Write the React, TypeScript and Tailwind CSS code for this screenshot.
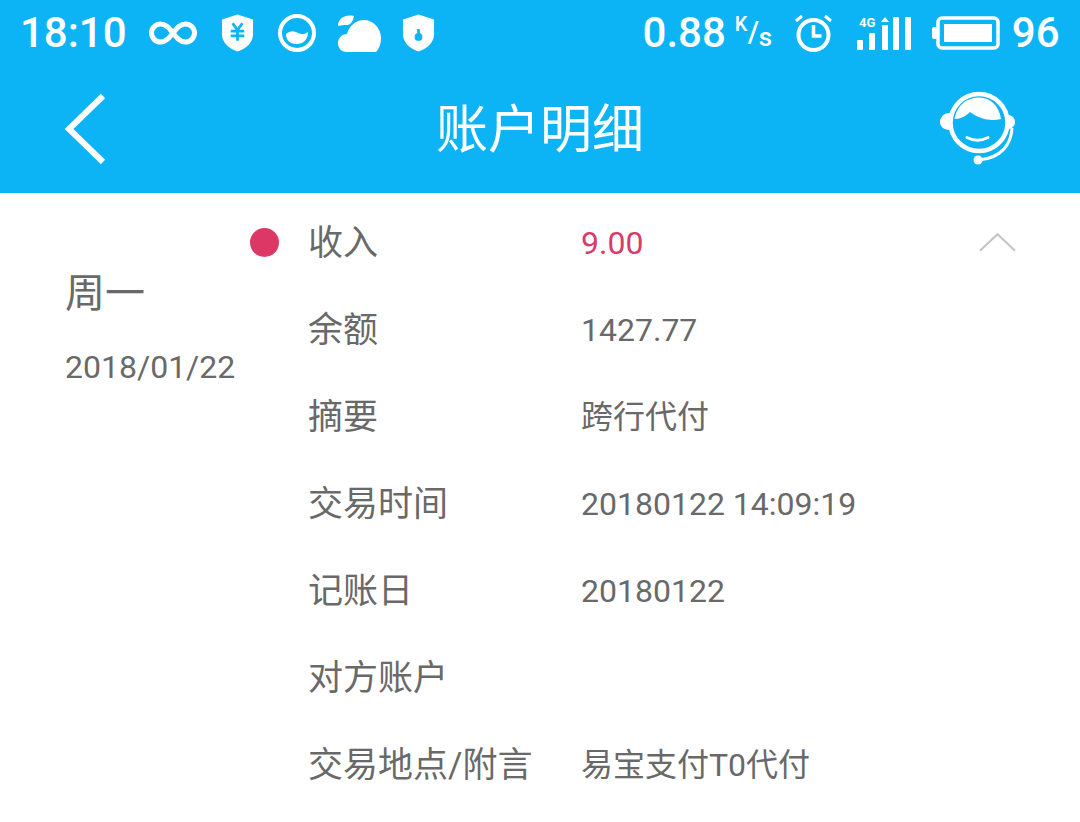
import React from 'react';

const cjk = "font-['Roboto','Noto_Sans_CJK_SC',sans-serif]";

const rows = [
  { label: '收入', value: '9.00', highlight: true },
  { label: '余额', value: '1427.77' },
  { label: '摘要', value: '跨行代付' },
  { label: '交易时间', value: '20180122 14:09:19' },
  { label: '记账日', value: '20180122' },
  { label: '对方账户', value: '' },
  { label: '交易地点/附言', value: '易宝支付T0代付' },
];

const StatusBar = () => (
  <div className="flex h-[66px] items-center text-white">
    <span className="ml-[20px] text-[42px] font-medium leading-none">18:10</span>
    <svg className="ml-[22px]" width="48" height="24" viewBox="0 0 48 24" fill="none" stroke="white" strokeWidth="5">
      <path d="M24 12C20 7 17 3 11.5 3a9 9 0 0 0 0 18c5.5 0 8.5-4 12.5-9s7-9 12.5-9a9 9 0 0 1 0 18c-5.5 0-8.5-4-12.5-9z" />
    </svg>
    <svg className="ml-[24px]" width="33" height="38" viewBox="0 0 34 38">
      <path d="M17 0l16 5v15c0 9-7 15-16 18C8 35 1 29 1 20V5z" fill="white" />
      <path d="M12 9l5 7 5-7M10 17h14M10 22h14M17 16v11" fill="none" stroke="#0db4f5" strokeWidth="2.8" />
    </svg>
    <svg className="ml-[24px]" width="38" height="38" viewBox="0 0 38 38">
      <circle cx="19" cy="19" r="17" fill="none" stroke="white" strokeWidth="4" />
      <path d="M8 20c5-4 8-3 12-1s7 1 10-1c0 8-5 12-11 12S8 27 8 20z" fill="white" />
    </svg>
    <svg className="ml-[21px]" width="44" height="38" viewBox="0 0 44 38" fill="white">
      <path d="M1 12C1 6 6 0 17 2c-1 6-4 9-7 9-3 0-6 0-9 1z" />
      <path d="M10 38C4 38 1 34 1 29c0-5 4-9 9-9 2-8 9-14 17-14 9 0 17 8 17 18 0 6-2 11-5 14z" />
    </svg>
    <svg className="ml-[21px]" width="33" height="38" viewBox="0 0 34 38">
      <path d="M17 0l16 5v15c0 9-7 15-16 18C8 35 1 29 1 20V5z" fill="white" />
      <circle cx="17" cy="23" r="4" fill="#0db4f5" />
      <rect x="15.6" y="15" width="2.8" height="6" fill="#0db4f5" />
    </svg>
    <span className="ml-[208px] text-[42px] font-medium leading-none">0.88</span>
    <span className="relative ml-[9px] h-[38px] w-[37px] font-medium">
      <span className="absolute left-0 top-0 text-[20px] leading-none">K</span>
      <span className="absolute left-[13px] top-[4px] text-[29px] leading-none">/</span>
      <span className="absolute left-[24px] top-[10px] text-[26px] leading-none">s</span>
    </span>
    <svg className="ml-[22px]" width="39" height="38" viewBox="0 0 39 38" fill="none" stroke="white">
      <circle cx="19.5" cy="21" r="15" strokeWidth="4" />
      <path d="M19.5 11v11h8" strokeWidth="3.5" />
      <path d="M2 7l6-5M37 7l-6-5" strokeWidth="3" />
    </svg>
    <svg className="ml-[24px]" width="54" height="34" viewBox="0 0 54 34" fill="white">
      <text x="2" y="11" fontSize="13" fontWeight="700" fontFamily="Roboto, sans-serif">4G</text>
      <path d="M24 6l4-5 4 5z" />
      <rect x="0" y="24" width="6" height="10" rx="1" />
      <rect x="12" y="17" width="6" height="17" rx="1" />
      <rect x="25" y="9" width="6" height="25" rx="1" />
      <rect x="36" y="1" width="6" height="33" rx="1" />
      <rect x="48" y="1" width="6" height="33" rx="1" />
    </svg>
    <svg className="ml-[21px]" width="68" height="34" viewBox="0 0 68 34">
      <rect x="0" y="11" width="5" height="12" rx="2" fill="white" />
      <rect x="6" y="2" width="60" height="30" rx="4" fill="none" stroke="white" strokeWidth="3.5" />
      <rect x="12" y="8" width="48" height="18" fill="white" />
    </svg>
    <span className="ml-[12px] text-[42px] font-medium leading-none">96</span>
  </div>
);

const AgentIcon = () => (
  <svg width="78" height="76" viewBox="0 0 78 76">
    <circle cx="40" cy="32.5" r="28.5" fill="none" stroke="white" strokeWidth="4.5" />
    <path d="M15.5 29C18 15 28 7.5 40 7.5 52 7.5 60 16 62 29 52 31 42 30 31 22 27 26 22 29 15.5 29z" fill="white" />
    <path d="M28 47.5Q38.5 53 49 47.5" fill="none" stroke="white" strokeWidth="3" strokeLinecap="round" />
    <path d="M11 23C4 23 1 28 1 32s3 8 10 8zM70 25c4 1 6 4 6 7s-2 6-6 7z" fill="white" />
    <path d="M73 38C72 55 62 68 40 70" fill="none" stroke="white" strokeWidth="3" />
    <circle cx="39" cy="70" r="4.5" fill="white" />
  </svg>
);

export default function App() {
  return (
    <div className={`h-[822px] w-[1080px] overflow-hidden bg-white ${cjk}`}>
      <header className="h-[193px] bg-[#0db4f5]">
        <StatusBar />
        <div className="relative flex h-[127px] items-center justify-center">
          <svg className="absolute left-[62px] top-[27px]" width="44" height="72" viewBox="0 0 44 72" fill="none" stroke="white" strokeWidth="6">
            <path d="M41 3L7 36l34 33" />
          </svg>
          <h1 className="pt-[3px] text-[52px] font-normal leading-none text-white">账户明细</h1>
          <div className="absolute left-[939px] top-[24px]">
            <AgentIcon />
          </div>
        </div>
      </header>
      <main className="flex pt-[6px] text-[#696969]">
        <div className="w-[250px] pl-[65px] pt-[70px]">
          <div className="text-[40px] leading-[50px]">周一</div>
          <div className="mt-[23px] whitespace-nowrap text-[32px] leading-[50px]">2018/01/22</div>
        </div>
        <div className="flex-1">
          {rows.map((row, i) => (
            <div key={row.label} className="flex h-[87px] items-center">
              <div className="w-[58px]">
                {i === 0 && <div className="mb-[1px] h-[29px] w-[29px] rounded-full bg-[#dc3865]" />}
              </div>
              <div className="w-[273px] whitespace-nowrap pt-[2px] text-[35px] leading-none">{row.label}</div>
              <div className={`whitespace-nowrap text-[32px] leading-none ${row.highlight ? 'text-[#d93a69]' : ''}`}>{row.value}</div>
              {i === 0 && (
                <svg className="mb-[2px] ml-auto mr-[64px]" width="37" height="20" viewBox="0 0 38 20" fill="none" stroke="#c4c4c4" strokeWidth="2">
                  <path d="M1 19L19 2l18 17" />
                </svg>
              )}
            </div>
          ))}
        </div>
      </main>
    </div>
  );
}
